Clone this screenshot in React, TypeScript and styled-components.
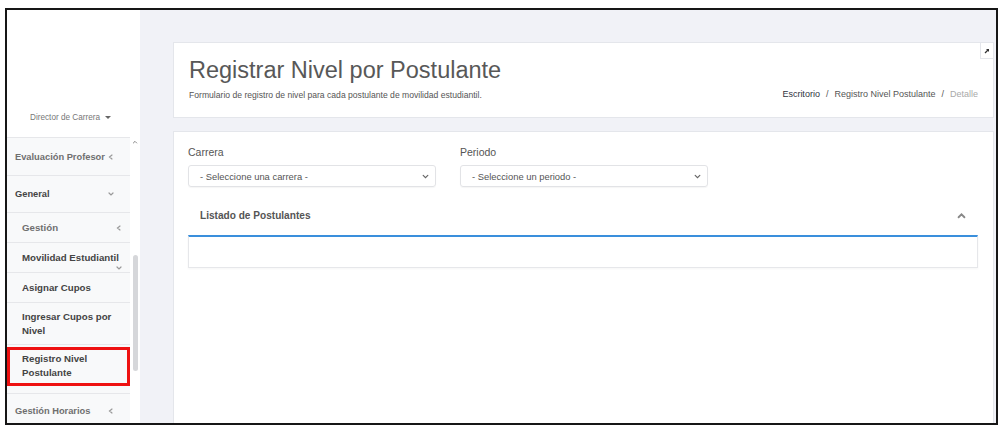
import React, { FC } from 'react';
import styled, { createGlobalStyle } from 'styled-components';

const GlobalStyle = createGlobalStyle`
  body {
    margin: 0;
    background: #ffffff;
    font-family: 'Liberation Sans', Arial, sans-serif;
  }
`;

const Frame = styled.div`
  box-sizing: border-box;
  display: flex;
  width: 993px;
  height: 417px;
  margin: 8px 0 0 5px;
  border: 2px solid #161616;
  overflow: hidden;
`;

const Sidebar = styled.aside`
  display: flex;
  flex-direction: column;
  width: 133px;
  flex-shrink: 0;
  background: #ffffff;
`;

const SidebarTop = styled.div`
  display: flex;
  align-items: flex-end;
  height: 127px;
  padding: 0 0 14px 23px;
  box-sizing: border-box;
`;

const RoleSwitch = styled.div`
  display: flex;
  align-items: center;
  gap: 5px;
  font-size: 8.2px;
  line-height: 10px;
  color: #777;
`;

const Caret = styled.span`
  width: 0;
  height: 0;
  margin-top: -1px;
  border-left: 3px solid transparent;
  border-right: 3px solid transparent;
  border-top: 3px solid #666;
`;

const MenuArea = styled.div`
  display: flex;
  flex: 1;
  min-height: 0;
`;

const MenuList = styled.nav`
  width: 123px;
  background: #f8f9fa;
  border-top: 1px solid #e6e7ea;
`;

const MenuItem = styled.div<{ $h: number; $sub?: boolean; $dark?: boolean; $top?: number }>`
  box-sizing: border-box;
  display: flex;
  flex-wrap: wrap;
  align-items: center;
  align-content: ${(p) => (p.$top ? 'flex-start' : 'center')};
  height: ${(p) => p.$h}px;
  padding: ${(p) => (p.$top ? `${p.$top}px` : '0')} ${(p) => (p.$sub ? 8 : 16)}px 0
    ${(p) => (p.$sub ? 15 : 8)}px;
  border-bottom: 1px solid #e6e7ea;
  font-size: ${(p) => (p.$sub ? 9.7 : 9.3)}px;
  line-height: 14px;
  font-weight: bold;
  color: ${(p) => (p.$dark ? '#444' : '#6f6f6f')};
`;

const ItemLabel = styled.span`
  flex: 0 0 auto;
`;

const ItemIcon = styled.span<{ $line?: number }>`
  display: flex;
  margin-left: auto;
  line-height: ${(p) => p.$line ?? 14}px;
`;

const ActiveItem = styled.div`
  height: 46px;
  border-bottom: 1px solid #e6e7ea;
`;

const ActiveBox = styled.div`
  box-sizing: border-box;
  height: 39px;
  margin: 2px 0 5px 0;
  padding: 2px 0 0 12px;
  border: 3px solid #ee1111;
  font-size: 9.7px;
  line-height: 14px;
  font-weight: bold;
  color: #444;
`;

const ScrollTrack = styled.div`
  display: flex;
  flex-direction: column;
  align-items: center;
  width: 10px;
  background: #ffffff;
  padding-top: 3px;
`;

const ScrollThumb = styled.div`
  width: 5px;
  height: 116px;
  margin-top: 111px;
  border-radius: 3px;
  background: #d6d7da;
`;

const Main = styled.main`
  display: flex;
  flex-direction: column;
  gap: 13px;
  flex: 1;
  padding: 32px 2px 0 33px;
  background: #f1f2f7;
`;

const HeaderCard = styled.section`
  position: relative;
  box-sizing: border-box;
  display: flex;
  justify-content: space-between;
  align-items: flex-end;
  height: 76px;
  padding: 0 15px 17px 15px;
  background: #ffffff;
  border: 1px solid #e4e6eb;
`;

const Title = styled.h1`
  margin: 0 0 6px;
  font-size: 23.5px;
  line-height: 27px;
  font-weight: normal;
  color: #585858;
`;

const Subtitle = styled.p`
  margin: 0;
  font-size: 8.6px;
  line-height: 10px;
  color: #555;
`;

const Breadcrumb = styled.div`
  display: flex;
  gap: 6px;
  margin-bottom: 0;
  font-size: 9px;
  line-height: 11px;
  color: #555;
`;

const Crumb = styled.span<{ $tone: 'home' | 'link' | 'muted' }>`
  color: ${(p) => (p.$tone === 'home' ? '#2f3340' : p.$tone === 'muted' ? '#a9a9a9' : '#555')};
`;

const PinButton = styled.button`
  position: absolute;
  top: -1px;
  right: -1px;
  display: flex;
  align-items: center;
  justify-content: center;
  width: 14px;
  height: 17px;
  padding: 0;
  background: #ffffff;
  border: 1px solid #e4e6eb;
`;

const ContentCard = styled.section`
  flex: 1;
  padding: 14px 15px 0 14px;
  background: #ffffff;
  border: 1px solid #e4e6eb;
  border-bottom: none;
`;

const FieldRow = styled.div`
  display: flex;
  gap: 24px;
`;

const Field = styled.div`
  display: flex;
  flex-direction: column;
  width: 248px;
`;

const Label = styled.label`
  margin-bottom: 6px;
  font-size: 10.5px;
  line-height: 13px;
  color: #555;
`;

const SelectBox = styled.div`
  box-sizing: border-box;
  display: flex;
  align-items: center;
  justify-content: space-between;
  height: 22px;
  padding: 0 6px 0 11px;
  border: 1px solid #e2e3e6;
  border-radius: 3px;
  box-shadow: 0 1px 1px rgba(0, 0, 0, 0.04);
  font-size: 9.4px;
  color: #555;
`;

const Panel = styled.div`
  margin-top: 9px;
`;

const PanelHeader = styled.div`
  display: flex;
  align-items: center;
  justify-content: space-between;
  height: 39px;
  padding: 0 12px 0 12px;
  font-size: 10.1px;
  font-weight: bold;
  color: #555;
`;

const PanelBody = styled.div`
  box-sizing: border-box;
  height: 33px;
  border: 1px solid #e6e7ea;
  border-top: 2px solid #3a8fdc;
  box-shadow: 0 1px 2px rgba(0, 0, 0, 0.04);
`;

const Chevron: FC<{ dir: 'left' | 'down' | 'up'; size?: number; color?: string; w?: number }> = ({
  dir,
  size = 6,
  color = '#999',
  w = 1.2,
}) => {
  const d =
    dir === 'left' ? 'M4 1 L1.5 3 L4 5' : dir === 'down' ? 'M1 2 L3 4 L5 2' : 'M1 4.5 L3.5 2 L6 4.5';
  const vb = dir === 'up' ? '0 0 7 6' : '0 0 6 6';
  return (
    <svg width={dir === 'up' ? size + 2 : size} height={size} viewBox={vb}>
      <path d={d} fill="none" stroke={color} strokeWidth={w} strokeLinecap="round" />
    </svg>
  );
};

type Item = {
  lines: string[];
  h: number;
  icon?: 'left' | 'down';
  sub?: boolean;
  dark?: boolean;
  top?: number;
};

const menu: Item[] = [
  { lines: ['Evaluación Profesor'], h: 38, icon: 'left' },
  { lines: ['General'], h: 37, icon: 'down', dark: true },
  { lines: ['Gestión'], h: 30, icon: 'left', sub: true },
  { lines: ['Movilidad Estudiantil'], h: 30, icon: 'down', sub: true, dark: true, top: 8 },
  { lines: ['Asignar Cupos'], h: 30, sub: true, dark: true },
  { lines: ['Ingresar Cupos por', 'Nivel'], h: 42, sub: true, dark: true },
];

export default function App() {
  return (
    <>
      <GlobalStyle />
      <Frame>
        <Sidebar>
          <SidebarTop>
            <RoleSwitch>
              Director de Carrera <Caret />
            </RoleSwitch>
          </SidebarTop>
          <MenuArea>
            <MenuList>
              {menu.map((m) => (
                <MenuItem key={m.lines[0]} $h={m.h} $sub={m.sub} $dark={m.dark} $top={m.top}>
                  <ItemLabel>
                    {m.lines.map((l, i) => (
                      <React.Fragment key={l}>
                        {i > 0 && <br />}
                        {l}
                      </React.Fragment>
                    ))}
                  </ItemLabel>
                  {m.icon && (
                    <ItemIcon $line={m.top ? 8 : 14}>
                      <Chevron dir={m.icon} />
                    </ItemIcon>
                  )}
                </MenuItem>
              ))}
              <ActiveItem>
                <ActiveBox>
                  Registro Nivel
                  <br />
                  Postulante
                </ActiveBox>
              </ActiveItem>
              <MenuItem $h={35}>
                <ItemLabel>Gestión Horarios</ItemLabel>
                <ItemIcon>
                  <Chevron dir="left" />
                </ItemIcon>
              </MenuItem>
            </MenuList>
            <ScrollTrack>
              <Chevron dir="up" size={4} color="#777" w={1.3} />
              <ScrollThumb />
            </ScrollTrack>
          </MenuArea>
        </Sidebar>
        <Main>
          <HeaderCard>
            <div>
              <Title>Registrar Nivel por Postulante</Title>
              <Subtitle>Formulario de registro de nivel para cada postulante de movilidad estudiantil.</Subtitle>
            </div>
            <Breadcrumb>
              <Crumb $tone="home">Escritorio</Crumb>
              <span>/</span>
              <Crumb $tone="link">Registro Nivel Postulante</Crumb>
              <span>/</span>
              <Crumb $tone="muted">Detalle</Crumb>
            </Breadcrumb>
            <PinButton aria-label="expandir">
              <svg width="6" height="6" viewBox="0 0 6 6">
                <path d="M1 5 L4.5 1.5" stroke="#333" strokeWidth="1.2" />
                <path d="M2 1 L5 1 L5 4 Z" fill="#333" />
              </svg>
            </PinButton>
          </HeaderCard>
          <ContentCard>
            <FieldRow>
              <Field>
                <Label>Carrera</Label>
                <SelectBox>
                  - Seleccione una carrera -
                  <Chevron dir="down" size={7} color="#666" w={1} />
                </SelectBox>
              </Field>
              <Field>
                <Label>Periodo</Label>
                <SelectBox>
                  - Seleccione un periodo -
                  <Chevron dir="down" size={7} color="#666" w={1} />
                </SelectBox>
              </Field>
            </FieldRow>
            <Panel>
              <PanelHeader>
                Listado de Postulantes
                <Chevron dir="up" size={7} color="#888" w={1.6} />
              </PanelHeader>
              <PanelBody />
            </Panel>
          </ContentCard>
        </Main>
      </Frame>
    </>
  );
}
